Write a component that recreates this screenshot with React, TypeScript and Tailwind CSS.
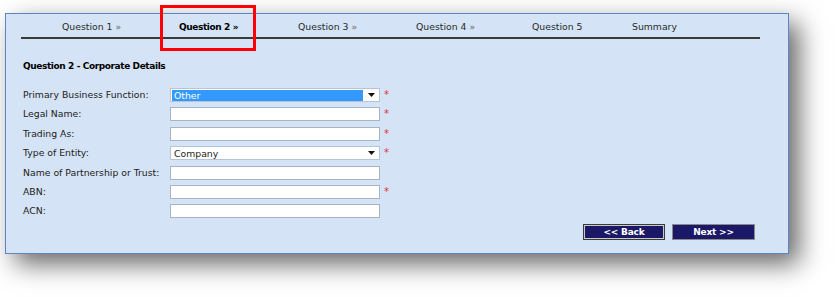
const tabs = [
  { label: 'Question 1', arrow: true, w: 'w-[117px]' },
  { label: 'Question 2', arrow: true, w: 'w-[119px]', active: true },
  { label: 'Question 3', arrow: true, w: 'w-[118px]' },
  { label: 'Question 4', arrow: true, w: 'w-[116px]' },
  { label: 'Question 5', arrow: false, w: 'w-[100px]' },
  { label: 'Summary', arrow: false, w: '' },
];

type Field = { label: string; kind: 'text' | 'select'; value?: string; selected?: boolean; required: boolean };

const fields: Field[] = [
  { label: 'Primary Business Function:', kind: 'select', value: 'Other', selected: true, required: true },
  { label: 'Legal Name:', kind: 'text', required: true },
  { label: 'Trading As:', kind: 'text', required: true },
  { label: 'Type of Entity:', kind: 'select', value: 'Company', required: true },
  { label: 'Name of Partnership or Trust:', kind: 'text', required: false },
  { label: 'ABN:', kind: 'text', required: true },
  { label: 'ACN:', kind: 'text', required: false },
];

const font = "font-['DejaVu_Sans',Verdana,sans-serif]";

const Arrow = () => (
  <svg width="7" height="4" viewBox="0 0 7 4" className="shrink-0">
    <path d="M0 0h7L3.5 4z" fill="#111" />
  </svg>
);

export default function App() {
  return (
    <div className={`relative w-[835px] h-[297px] bg-white overflow-hidden pt-[13px] pl-[5px] ${font}`}>
      <div className="w-[784px] h-[241px] border border-[#5b86c4] bg-[#d5e3f6] shadow-[10px_10px_24px_rgba(0,0,0,0.6)] pl-[15px]">
        {/* step tabs */}
        <div className="flex items-center w-[739px] h-[25px] pt-[3px] border-b-2 border-[#3a3a3a] pl-[41px] text-[9.3px] text-[#2a2a2a]">
          {tabs.map(t => (
            <div key={t.label} className={`${t.w} whitespace-nowrap`}>
              {t.active ? (
                <span className="font-bold text-[9px] tracking-[-0.4px] text-black">
                  {t.label} <span>»</span>
                </span>
              ) : (
                <span>
                  {t.label}
                  {t.arrow && <span className="text-[#666]"> »</span>}
                </span>
              )}
            </div>
          ))}
        </div>

        <div className="pl-[2px]">
          <h2 className="mt-[21px] h-[12px] leading-[12px] font-bold text-[9px] tracking-[-0.4px] text-black">
            Question 2 - Corporate Details
          </h2>

          <div className="mt-[16px] flex flex-col gap-[5.4px]">
            {fields.map(f => (
              <div key={f.label} className="flex items-center h-[14px]">
                <label className="w-[147px] text-[9.3px] text-[#1c1c1c] whitespace-nowrap">{f.label}</label>
                {f.kind === 'select' ? (
                  <div className="w-[210px] h-[14px] bg-white border border-[#b9c4d2] flex items-center pl-[1px] pr-[4px]">
                    {f.selected ? (
                      <span className="w-[191px] h-[11px] bg-[#3399ff] text-white text-[9.3px] leading-[11px] pl-[2px]">{f.value}</span>
                    ) : (
                      <span className="w-[191px] text-[9.3px] text-[#1c1c1c] leading-[11px] pl-[2px]">{f.value}</span>
                    )}
                    <div className="flex-1 flex justify-end">
                      <Arrow />
                    </div>
                  </div>
                ) : (
                  <div className="w-[210px] h-[14px] bg-white border border-[#a7b4c5]" />
                )}
                {f.required && (
                  <span className="self-start mt-[1px] ml-[4px] text-[10px] leading-[12px] text-[#e0303a]">*</span>
                )}
              </div>
            ))}
          </div>
        </div>

        {/* navigation buttons */}
        <div className="flex justify-end gap-[7px] pr-[33px] mt-[6px]">
          <button className="w-[82px] h-[16px] bg-[#1b1867] border border-[#3a3a3a] ring-1 ring-inset ring-[#c9c9c9] text-white font-bold text-[9px] tracking-[-0.2px] leading-none">
            &lt;&lt; Back
          </button>
          <button className="w-[83px] h-[16px] bg-[#1b1867] border border-[#8a8a8a] text-white font-bold text-[9px] tracking-[-0.2px] leading-none">
            Next &gt;&gt;
          </button>
        </div>
      </div>

      {/* highlight annotation */}
      <div className="absolute left-[160px] top-[5px] w-[96px] h-[46px] border-[3px] border-[#ff0000]" />
    </div>
  );
}
